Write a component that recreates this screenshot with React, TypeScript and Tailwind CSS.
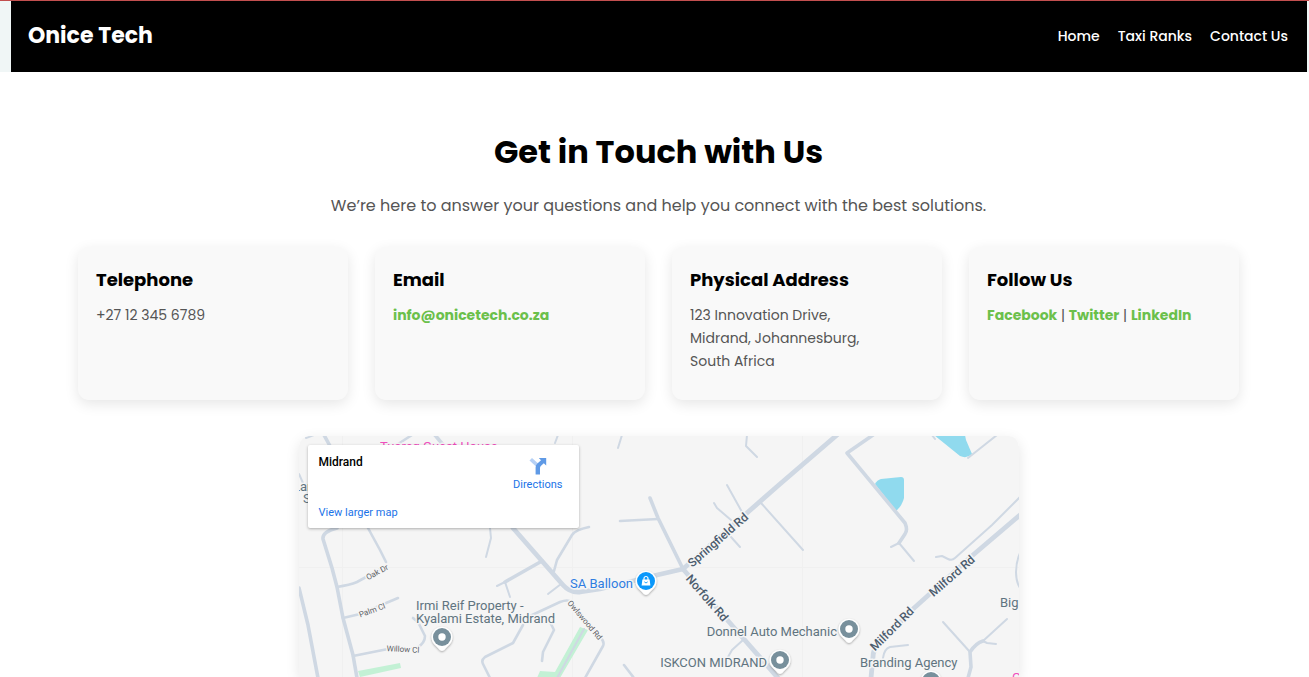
import type { ReactNode } from "react";

const navLinks = ["Home", "Taxi Ranks", "Contact Us"];
const socialLinks = ["Facebook", "Twitter", "LinkedIn"];

const linkClass = "font-bold text-[#6bc04b] hover:underline";

const wideRoads = [
  "M513 528 L563 585 Q570 593 580 592 L600 589 L657 575 L683 569 L780 484 L837 435",
  "M683 569 L743 638 L778 678",
  "M1020 515 L973 555 L913 609 L878 645 Q873 650 873 657 L871 678",
];

const mediumRoads = [
  "M873 435 L847 453 L905 523 Q908 530 905 534 L899 543",
  "M542 561 L505 582",
  "M337 528 Q322 532 323 539 L332 568 L337 587 L343 618 L353 655 L357 678",
  "M299 588 L308 625 L318 678",
  "M324 435 L330 446",
  "M650 498 L658 518 L683 569",
  "M983 641 Q976 643 970 652 L971 667 L968 678",
  "M435 435 L444 446",
];

const smallRoads = [
  "M620 521 L658 519",
  "M395 446 L412 435",
  "M368 528 L380 550 L386 562",
  "M353 656 L388 649 L417 648 Q425 643 425 636 L418 622 L413 618",
  "M337 587 Q350 585 357 582 L386 566",
  "M343 618 L360 614 L398 598",
  "M523 625 L513 643 L485 657 Q481 660 483 664 L490 678",
  "M530 616 L560 602 Q568 599 571 602 L600 637 Q605 642 603 646 L585 678",
  "M550 622 L554 630 L543 652 L542 661",
  "M589 527 Q575 530 572 535 L557 560 L554 571",
  "M624 665 L634 678",
];

const narrowRoads = [
  "M306 438 L314 435",
  "M299 474 L303 483",
  "M490 528 L491 538 L486 557",
  "M497 586 L505 582 L510 597",
  "M561 584 L548 594",
  "M558 435 L555 443",
  "M622 435 L618 448",
  "M747 435 L746 446 L757 457",
  "M727 485 L742 512",
  "M714 503 L717 508 L731 520",
  "M731 537 L740 547",
  "M761 503 L803 550",
  "M743 640 L732 650 L728 657",
  "M584 629 L557 678",
  "M891 547 L899 543 L914 561",
  "M932 435 L935 439",
  "M997 435 L968 458",
  "M1020 497 L992 525 L955 558 Q952 561 948 559 L942 556 L936 557",
  "M1020 553 Q1016 562 1016 572 Q1016 582 1020 588",
  "M908 645 L890 647 Q884 649 883 658",
  "M943 622 L970 652",
  "M1007 619 L983 641 L987 643 L996 644",
];

function Pin({ x, y, color, children }: { x: number; y: number; color: string; children?: ReactNode }) {
  return (
    <g transform={`translate(${x} ${y})`}>
      <path
        d="M0 14 Q-2 14 -4 11 L-8 7 A10.5 10.5 0 1 1 8 7 L4 11 Q2 14 0 14Z"
        fill="#fff"
        filter="url(#pin-shadow)"
      />
      <circle r="9" fill={color} />
      {children ?? <circle r="3.7" fill="#fff" />}
    </g>
  );
}

function MapDrawing() {
  return (
    <svg
      className="block h-full w-full font-[Roboto,sans-serif]"
      viewBox="299 436 720 241"
      preserveAspectRatio="xMidYMin slice"
      role="img"
      aria-label="Map of Midrand"
    >
      <defs>
        <filter id="pin-shadow" x="-30%" y="-30%" width="160%" height="170%">
          <feDropShadow dx="0" dy="1" stdDeviation="0.8" floodColor="#000" floodOpacity="0.35" />
        </filter>
      </defs>
      <rect x="299" y="436" width="720" height="600" fill="#f5f5f5" />
      <path d="M342.500 436V700M572.500 436V700M802.500 436V700M299 567.500H1019" stroke="#f0f0f0" fill="none" />
      <g fill="#c3f1d5">
        <path d="M358 671 L400 663 L401 668 L360 677Z" />
        <path d="M580 627 L588 630 L560 678 L537 678 L540 671 L555 672Z" />
      </g>
      <g fill="#90daee">
        <path d="M875 484 Q877 480 881 479 L901 477 Q904 477 904 480 L904 498 Q902 506 896 511Z" />
        <path d="M934 435 L965 435 L966 440 L972 454 Q967 459 960 456Z" />
      </g>
      <g fill="none" stroke="#cfd8e3" strokeLinejoin="round" strokeLinecap="round">
        <g strokeWidth="2">{narrowRoads.map((d) => <path key={d} d={d} />)}</g>
        <g strokeWidth="2.6">{smallRoads.map((d) => <path key={d} d={d} />)}</g>
        <g strokeWidth="3.6">{mediumRoads.map((d) => <path key={d} d={d} />)}</g>
        <g strokeWidth="4.8">{wideRoads.map((d) => <path key={d} d={d} />)}</g>
      </g>

      <g stroke="#f5f5f5" strokeWidth="3" strokeLinejoin="round" paintOrder="stroke">
        <g fill="#5f7480" fontSize="13">
          <text x="416" y="610">Irmi Reif Property -</text>
          <text x="416" y="623">Kyalami Estate, Midrand</text>
          <text x="837" y="636" textAnchor="end">Donnel Auto Mechanic</text>
          <text x="767" y="667" textAnchor="end">ISKCON MIDRAND</text>
          <text x="860" y="667">Branding Agency</text>
          <text x="1000" y="607">Big</text>
          <text x="293" y="491">Lar</text>
          <text x="303" y="503">S</text>
        </g>
        <text x="633" y="588" textAnchor="end" fill="#2f7de1" fontSize="13">SA Balloon</text>
        <g fill="#f04fbd" fontSize="13">
          <text x="380" y="451">Tuareg Guest House</text>
          <text x="1012" y="682">G</text>
        </g>
        <g fill="#4c5c6e" fontSize="12" fontWeight="500" textAnchor="middle">
          <text transform="translate(718 540) rotate(-41)" dy="4">Springfield Rd</text>
          <text transform="translate(707 598) rotate(49)" dy="4">Norfolk Rd</text>
          <text transform="translate(952 576) rotate(-41)" dy="4">Milford Rd</text>
          <text transform="translate(892 629) rotate(-45)" dy="4">Milford Rd</text>
        </g>
        <g fill="#5d6166" fontSize="8" textAnchor="middle">
          <text transform="translate(377 572) rotate(-28)" dy="3">Oak Dr</text>
          <text transform="translate(372 610) rotate(-20)" dy="3">Palm Cl</text>
          <text transform="translate(403 649) rotate(3)" dy="3">Willow Cl</text>
          <text transform="translate(585 620) rotate(50)" dy="3">Owlswood Rd</text>
        </g>
      </g>

      <Pin x={442} y={637} color="#78909c" />
      <Pin x={849} y={629} color="#78909c" />
      <Pin x={780} y={660} color="#78909c" />
      <Pin x={931} y={681} color="#78909c" />
      <Pin x={646} y={581} color="#0b98fb">
        <path d="M-4.400 4.500 L-3.600 -1.500 H3.600 L4.400 4.500Z" fill="#fff" />
        <path d="M-2 -1 V-2.500 A2 2 0 0 1 2 -2.500 V-1" fill="none" stroke="#fff" strokeWidth="1.2" />
        <path d="M-1.700 0.800 Q0 3.200 1.700 0.800" fill="none" stroke="#0b98fb" strokeWidth="0.9" />
      </Pin>
    </svg>
  );
}

function DirectionsIcon() {
  return (
    <svg className="h-[18px] w-[18px]" viewBox="0 0 18 18" aria-hidden="true">
      <path d="M0.500 3.400 L3 1 L9.800 7 L7 9.600Z" fill="#b5d0f5" />
      <path d="M9.800 1 H17.200 V8.400 L14.800 6.200 L11.800 9 Q11 9.800 11 11 V17.400 H6.600 V10.600 Q6.600 8 8.400 6.400 L12 3.200Z" fill="#5f9ae6" />
    </svg>
  );
}

function Card({ title, children }: { title: string; children: ReactNode }) {
  return (
    <section className="min-h-[153px] rounded-[11px] bg-[#f9f9f9] px-[18px] pt-[21px] pb-[27px] shadow-[0_4px_14px_rgba(0,0,0,0.1)]">
      <h2 className="mb-3 text-[18px] leading-6 font-bold text-black">{title}</h2>
      <div className="text-[14px] leading-[23px] text-[#555]">{children}</div>
    </section>
  );
}

export default function App() {
  return (
    <div className="flex min-h-screen flex-col bg-white font-[Poppins,Inter,sans-serif]">
      <div className="border-t border-[#c24f4f] bg-[#f0f6f6] pr-[2px] pl-[11px]">
        <header className="flex h-[71px] items-center justify-between bg-black pr-[19px] pb-[2px] pl-[17px] text-white">
          <a href="#" className="text-[22px] leading-8 font-bold">Onice Tech</a>
          <nav className="flex gap-[18px] text-[14px] leading-6 font-medium">
            {navLinks.map((label) => (
              <a key={label} href="#" className="hover:underline">{label}</a>
            ))}
          </nav>
        </header>
      </div>

      <main className="flex flex-1 flex-col pr-[3px] pl-[11px] pt-14">
        <h1 className="text-center text-[32px] leading-12 font-bold text-black">Get in Touch with Us</h1>
        <p className="mt-4 text-center text-[16px] leading-7 text-[#555]">
          We’re here to answer your questions and help you connect with the best solutions.
        </p>

        <div className="mx-auto mt-[27px] grid w-full max-w-[1161px] grid-cols-1 gap-[27px] sm:grid-cols-2 lg:grid-cols-4">
          <Card title="Telephone">+27 12 345 6789</Card>
          <Card title="Email">
            <a href="mailto:info@onicetech.co.za" className={linkClass}>info@onicetech.co.za</a>
          </Card>
          <Card title="Physical Address">
            123 Innovation Drive,<br />
            Midrand, Johannesburg,<br />
            South Africa
          </Card>
          <Card title="Follow Us">
            {socialLinks.map((label, i) => (
              <span key={label}>
                {i > 0 && " | "}
                <a href="#" className={linkClass}>{label}</a>
              </span>
            ))}
          </Card>
        </div>

        <div className="relative mx-auto mt-9 h-[241px] w-full max-w-[720px] overflow-hidden rounded-t-[11px] shadow-[0_4px_14px_rgba(0,0,0,0.1)]">
          <MapDrawing />
          <div className="absolute top-[9px] left-[9px] flex h-[83px] w-[271px] justify-between rounded-[2px] bg-white pt-[9px] pr-4 pb-[7px] pl-[11px] font-[Roboto,sans-serif] shadow-[0_1px_3px_rgba(0,0,0,0.3)]">
            <div className="flex flex-col justify-between">
              <div className="text-[12px] leading-4 font-medium text-black">Midrand</div>
              <a href="#" className="text-[11px] leading-4 text-[#1a73e8]">View larger map</a>
            </div>
            <a href="#" className="flex flex-col items-center gap-[2px] pt-[3px] text-[11px] leading-4 text-[#1a73e8]">
              <DirectionsIcon />
              Directions
            </a>
          </div>
        </div>
      </main>
    </div>
  );
}
